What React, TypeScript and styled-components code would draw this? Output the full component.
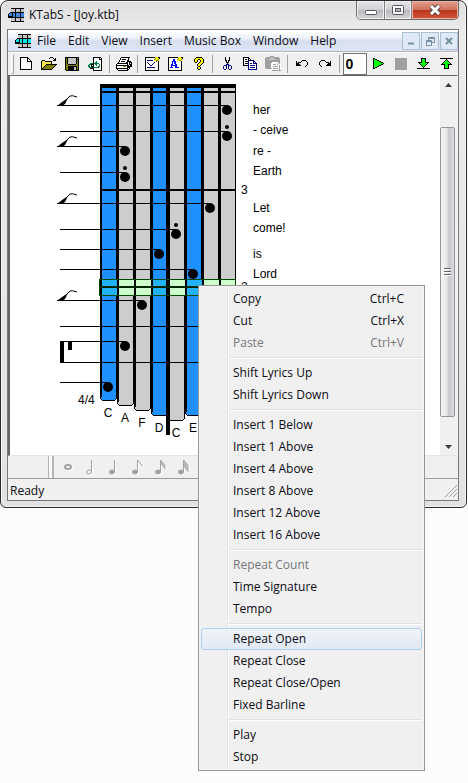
import React from "react";
import styled, { createGlobalStyle, css } from "styled-components";

const uiFont = `"Open Sans", "Noto Sans", sans-serif`;
const scoreFont = `"Liberation Sans", Arial, sans-serif`;

const GlobalStyle = createGlobalStyle`
  * { box-sizing: border-box; }
  body { margin: 0; background: #fcfcfc; font: 12px/16px ${uiFont}; color: #0b0b14; }
  button { font: inherit; color: inherit; border: 0; padding: 0; background: none; }
  svg { display: block; }
`;

/* ---------- pixel icons ---------- */

const palette: Record<string, string> = {
  k: "#000000",
  w: "#ffffff",
  o: "#808000",
  Y: "#ffff00",
  y: "#e8e080",
  g: "#008040",
  G: "#00ff00",
  n: "#000080",
  B: "#0000ff",
  s: "#a0a0a0",
  l: "#c4c4c4",
  c: "#00e8f0",
  b: "#3a86e0",
};

function PixelIcon({ rows }: { rows: string[] }) {
  const width = Math.max(...rows.map((r) => r.length));
  const runs: React.ReactElement[] = [];
  rows.forEach((row, y) => {
    let x = 0;
    while (x < row.length) {
      const ch = row[x];
      let end = x + 1;
      while (end < row.length && row[end] === ch) end++;
      if (palette[ch]) {
        runs.push(<rect key={`${x}-${y}`} x={x} y={y} width={end - x} height={1} fill={palette[ch]} />);
      }
      x = end;
    }
  });
  return (
    <svg width={width} height={rows.length} shapeRendering="crispEdges" aria-hidden="true">
      {runs}
    </svg>
  );
}

const logo = (fill: string) =>
  [
    "...kkkkkkkkkkkkk",
    "...llllkllllklll",
    "...llllkllllklll",
    "...llllkllllklll",
    "..kkkkkkkkkkkkkk",
    ".kbbkbbkbbbbkbbb",
    "kbbbkbbkbbbbkbbb",
    "kbbbkbbkbbbbkbbb",
    "kkkkkbbkbbbbkbbb",
    "kkkkkkkkkkkkkkkk",
    "...llllkllllklll",
    "...llllkllllklll",
    "...llllkllllklll",
    "...kkkkkkkkkkkkk",
  ].map((r) => r.replace(/b/g, fill));

const icons = {
  new: [
    "kkkkkkkk....",
    "kwwwwwwkk...",
    "kwwwwwwkwk..",
    "kwwwwwwkwwk.",
    "kwwwwwwkkkkk",
    "kwwwwwwwwwwk",
    "kwwwwwwwwwwk",
    "kwwwwwwwwwwk",
    "kwwwwwwwwwwk",
    "kwwwwwwwwwwk",
    "kwwwwwwwwwwk",
    "kwwwwwwwwwwk",
    "kkkkkkkkkkkk",
  ],
  open: [
    ".........kkk....",
    "........k...k.k.",
    ".............kk.",
    ".kkk........kkk.",
    "kyYykkkkkkk.....",
    "kYyYyYyYyYk.....",
    "kyYyYyYyYyk.....",
    "kYyYykkkkkkkkkkk",
    "kyYykoooooooook.",
    "kYykoooooooook..",
    "kykoooooooook...",
    "kkoooooooook....",
    "kkkkkkkkkkk.....",
  ],
  save: [
    "kkkkkkkkkkkkkk",
    "kokllllllllklk",
    "kokllllllllkkk",
    "kokllllllllkok",
    "kokllllllllkok",
    "kokllllllllkok",
    "kokllllllllkok",
    "kookkkkkkkkook",
    "kooooooooooook",
    "kookkkkkkkkkok",
    "kookkkkkkllkok",
    "kookkkkkkllkok",
    "kookkkkkkllkok",
    ".kkkkkkkkkkkkk",
  ],
  import: [
    ".....kkkkkkkk.",
    ".....kwwwwwkwk",
    ".....kwwwwwkkk",
    ".....kwwwwwwwk",
    ".....kwwgwwwwk",
    ".....kwggwwwwk",
    "..gggkgggggwwk",
    ".ggkkkwggwwgwk",
    "gg.k.kwwgwwgwk",
    "gg.kkkwwwwggwk",
    ".gggkgggggkwwk",
    "..kkkkwwwwwwwk",
    ".....kwwwwwwwk",
    ".....kkkkkkkkk",
  ],
  print: [
    ".....kkkkkkkkk..",
    "....kwwwwwwwk...",
    "....kwkkkkwwk...",
    "...kwwwwwwwkk...",
    "...kwkkkkwwkkkk.",
    "..kwwwwwwwkkwkkk",
    ".kkkkkkkkkkkwkwk",
    "kwwwwwwwwwwkwkkk",
    "kkkkkkkkkkkkkwkk",
    "kwwwwwwooowkkkkk",
    "kwwwwwwwwwwkkk..",
    "kkkkkkkkkkkkwk..",
    ".kwwwwwwwwwkk...",
    "..kkkkkkkkkk....",
  ],
  props: [
    "kkkkkkkkkkYYYkk",
    "kwwwwwwwwwoYYYk",
    "kwwwwwwwwoYYYo.",
    "kwnnnnnnwYYooY.",
    "kwwwwwwwwwwowk.",
    "kwnwwwwwwnwwwk.",
    "kwwnwwwwnwwwwk.",
    "kwwwnwwnwwwwwk.",
    "kwwwwnnwwwwwwk.",
    "kwwwwwwwwwwwwk.",
    "kwnnnnnnnnwwwk.",
    "kwwwwwwwwwwwwk.",
    "kwwwwwwwwwwwwk.",
    "kkkkkkkkkkkkkk.",
  ],
  font: [
    "kkkkkkkkkkYYYkk",
    "kwwwwwwwwwoYYYk",
    "kwwwwBBwwoYYYo.",
    "kwwwwBBwwYYooY.",
    "kwwwBBBBwwwwwk.",
    "kwwwBwBBwwwwwk.",
    "kwwwBwBBwwwwwk.",
    "kwwBBwwBBwwwwk.",
    "kwwBBBBBBwwwwk.",
    "kwwBwwwBBwwwwk.",
    "kwBBBwwBBBBwwk.",
    "kwwwwwwwwwwwwk.",
    "kwwwwwwwwwwwwk.",
    "kkkkkkkkkkkkkk.",
  ],
  help: [
    "..kkkkkk..",
    ".kYYYYYYk.",
    "kYYYkkYYYk",
    "kYYk..kYYk",
    "kYYk..kYYk",
    ".kk..kYYYk",
    "....kYYYk.",
    "...kYYYk..",
    "...kYYk...",
    "....kk....",
    "...kYYk...",
    "...kYYk...",
    "....kk....",
  ],
  cut: [
    "..k...k..",
    "..k...k..",
    "..k...k..",
    "..kk.kk..",
    "...k.k...",
    "...kkk...",
    "....k....",
    "...nnn...",
    ".nnn.nnn.",
    "n..n.n..n",
    "n..n.n..n",
    "n..n.n..n",
    ".nn...nn.",
  ],
  copy: [
    "kkkkkk.........",
    "kwwwwkk........",
    "kwkkwkwk.......",
    "kwwwwnnnnnn....",
    "kwkkknwwwwnn...",
    "kwwwwnwwwwnwn..",
    "kwkkknwnnwnnnn.",
    "kwwwwnwwwwwwwn.",
    "kkkkknwnnnnnwn.",
    ".....nwwwwwwwn.",
    ".....nwnnnnnwn.",
    ".....nwwwwwwwn.",
    ".....nnnnnnnnn.",
  ],
  paste: [
    ".....ssss.......",
    ".sssssllssssss..",
    "sssssllllssssss.",
    "ssslllllllsssss.",
    "sssssssssssssss.",
    "sssssssssssssss.",
    "ssssssswwwwwwss.",
    "sssssswwwwwwlws.",
    "sssssswwssswllww",
    "sssssswwwwwwwwsw",
    "sssssswwssssswsw",
    "sssssswwwwwwwwsw",
    ".sssssswssssswsw",
    "......wwwwwwwwsw",
    ".......sssssssss",
  ],
  undo: [
    "......kkkk..",
    "k....k....k.",
    "k.kkk......k",
    "kkk........k",
    "kkkk.......k",
    "kkkkk.....k.",
    ".........k..",
  ],
  redo: [
    "..kkkk......",
    ".k....k....k",
    "k......kkk.k",
    "k........kkk",
    "k.......kkkk",
    ".k.....kkkkk",
    "..k.........",
  ],
  play: [
    "kk.........",
    "kGkk.......",
    "kGGGkk.....",
    "kGGGGGkk...",
    "kGGGGGGGkk.",
    "kGGGGGGGGGk",
    "kGGGGGGGkk.",
    "kGGGGGkk...",
    "kGGGkk.....",
    "kGkk.......",
    "kk.........",
  ],
  stop: Array(12).fill("ssssssssssss"),
  down: [
    "....kkkkk....",
    "....kGGGk....",
    "....kGGGk....",
    "....kGGGk....",
    ".kkkkGGGkkkk.",
    "..kGGGGGGGk..",
    "...kGGGGGk...",
    "....kGGGk....",
    ".....kGk.....",
    "......k......",
    "kkkkkkkkkkkkk",
  ],
  up: [
    "kkkkkkkkkkkkk",
    "......k......",
    ".....kGk.....",
    "....kGGGk....",
    "...kGGGGGk...",
    "..kGGGGGGGk..",
    ".kkkkGGGkkkk.",
    "....kGGGk....",
    "....kGGGk....",
    "....kGGGk....",
    "....kkkkk....",
  ],
};

/* ---------- window frame ---------- */

const Desktop = styled.main`
  position: relative;
  min-height: 783px;
  padding-right: 1px;
  background: #fcfcfc;
`;

const AppWindow = styled.section`
  padding: 0 7px 6px 6px;
  border: 1px solid #2c2c2e;
  border-radius: 8px 8px 6px 6px;
  background: linear-gradient(#dedede, #ebebeb 28px, #e2e2e2);
  box-shadow: inset 0 0 0 1px #f6f6f6;
`;

const TitleBar = styled.header`
  display: flex;
  align-items: flex-start;
  height: 28px;
  padding-left: 1px;
`;

const Title = styled.h1`
  flex: 1;
  display: flex;
  align-items: center;
  gap: 5px;
  height: 28px;
  margin: 0;
  font: inherit;
`;

const CaptionButtons = styled.div`
  display: flex;
  height: 19px;
  border: 1px solid #6d6d70;
  border-top: 0;
  border-radius: 0 0 5px 5px;
  overflow: hidden;
`;

const CaptionButton = styled.button<{ $close?: boolean }>`
  display: grid;
  place-items: center;
  width: ${(p) => (p.$close ? 47 : 27)}px;
  background: linear-gradient(#e6e6e8, #d0d0d4 50%, #b9b9bf 50%, #d4d4d8);
  box-shadow: inset 0 0 0 1px #f0f0f2;
  & + & { border-left: 1px solid #7d7d80; }
  ${(p) =>
    p.$close &&
    css`
      background: linear-gradient(#e3a08f, #d0715d 48%, #b8341b 50%, #d4573a);
      box-shadow: inset 0 0 0 1px #eab3a5;
    `}
`;

const Client = styled.div`
  border: 1px solid #77777c;
  background: #f0f0f0;
`;

const MenuBar = styled.nav`
  display: flex;
  align-items: center;
  height: 21px;
  padding-left: 7px;
  border-top: 1px solid #ffffff;
  background: linear-gradient(#ffffff, #eef1f9 35%, #d7dff0 50%, #dfe5f3);
`;

const MenuTitle = styled.button`
  height: 20px;
  padding: 0 6px;
`;

const ChildControls = styled.div`
  display: flex;
  gap: 1px;
  margin-left: auto;
`;

const ChildButton = styled.button`
  display: grid;
  place-items: center;
  width: 18px;
  height: 18px;
  border: 1px solid #a9c0d3;
  background: #dfeaf6;
`;

const ToolBar = styled.div`
  display: flex;
  align-items: center;
  height: 24px;
  padding-left: 3px;
  border-top: 1px solid #b4b4b4;
  box-shadow: inset 0 1px #ffffff;
`;

const Grip = styled.span`
  width: 3px;
  height: 20px;
  margin-right: 1px;
  border: 1px solid #a5a5a5;
  border-top-color: #ffffff;
  border-left-color: #ffffff;
`;

const Tool = styled.button`
  display: grid;
  place-items: center;
  width: 23px;
  height: 22px;
`;

const Divider = styled.span`
  width: 1px;
  height: 18px;
  margin: 0 3px 0 2px;
  background: #a0a0a0;
`;

const CountInput = styled.input`
  width: 24px;
  height: 22px;
  padding: 0 2px;
  border: 1px solid #707070;
  background: #ffffff;
  color: #000000;
  font: bold 14px/18px ${scoreFont};
`;

/* ---------- score view ---------- */

const View = styled.div`
  display: flex;
  border: 1px solid #66666a;
  border-left-width: 2px;
  border-right-color: #f4f4f4;
  border-bottom-color: #e4e4e4;
  background: #ffffff;
`;

const ScoreArea = styled.div`
  flex: 1;
  min-width: 0;
  overflow: hidden;
`;

const ScrollBar = styled.div`
  display: flex;
  flex-direction: column;
  width: 17px;
  background: #f0f0f0;
`;

const ScrollArrow = styled.button`
  display: grid;
  place-items: center;
  height: 17px;
`;

const ScrollTrack = styled.div`
  flex: 1;
  padding: 34px 2px 21px 0;
`;

const ScrollThumb = styled.div`
  display: grid;
  place-items: center;
  height: 100%;
  border: 1px solid #97979a;
  border-radius: 2px;
  background: linear-gradient(90deg, #f6f6f6, #e6e6e8 45%, #c8c8cf 60%, #dadadf);
`;

const NoteBar = styled.div`
  display: flex;
  align-items: center;
  height: 23px;
  padding-left: 40px;
  border-bottom: 1px solid #9a9a9a;
`;

const NoteGrip = styled.span`
  width: 6px;
  height: 22px;
  margin-right: 2px;
  border: 1px solid #b4b4b4;
  border-width: 0 2px 0 1px;
  background: #fafafa;
`;

const StatusBar = styled.footer`
  display: flex;
  align-items: center;
  justify-content: space-between;
  height: 21px;
  padding: 2px 1px 0 2px;
`;

/* ---------- context menu ---------- */

const ContextMenu = styled.div`
  position: absolute;
  left: 198px;
  top: 285px;
  width: 227px;
  padding: 2px;
  border: 1px solid #979797;
  background: linear-gradient(90deg, transparent 28px, #e2e3e3 28px 29px, #ffffff 29px 30px, transparent 30px) #f0f0f0;
  box-shadow: inset 0 0 0 1px #f5f5f5;
`;

const MenuItem = styled.button<{ $active?: boolean }>`
  display: flex;
  justify-content: space-between;
  align-items: center;
  width: 100%;
  height: 22px;
  padding: 0 17px 0 31px;
  border: 1px solid transparent;
  border-radius: 3px;
  text-align: left;
  &:disabled { color: #77777b; }
  ${(p) =>
    p.$active &&
    css`
      border-color: #aecff7;
      background: linear-gradient(rgba(240, 244, 250, 0.8), rgba(222, 232, 246, 0.8));
    `}
`;

const MenuRule = styled.hr`
  height: 2px;
  margin: 3px 0 3px 28px;
  border: 0;
  border-top: 1px solid #e0e0e0;
  background: #ffffff;
`;

/* ---------- score drawing ---------- */

const BLUE = "#1e90ff";
const GRAY = "#cdcdcd";

const tines = [
  { x: 101, fill: BLUE, bottom: 400, label: "C" },
  { x: 118, fill: GRAY, bottom: 405, label: "A" },
  { x: 135, fill: GRAY, bottom: 410, label: "F" },
  { x: 152, fill: BLUE, bottom: 415, label: "D" },
  { x: 169, fill: GRAY, bottom: 420, label: "C" },
  { x: 186, fill: BLUE, bottom: 415, label: "E" },
  { x: 203, fill: GRAY, bottom: 410, label: "G" },
  { x: 220, fill: GRAY, bottom: 405, label: "B" },
];

const notes = [
  { y: 105, x: 227, flag: true },
  { y: 131, x: 227, dot: true },
  { y: 146, x: 125, flag: true },
  { y: 172, x: 125, dot: true },
  { y: 203, x: 210, flag: true },
  { y: 229, x: 176, dot: true },
  { y: 249, x: 159 },
  { y: 269, x: 193 },
  { y: 300, x: 142, flag: true },
  { y: 326, x: 210 },
  { y: 341, x: 125 },
  { y: 362, x: 210 },
  { y: 382, x: 108 },
];

const lyrics: [string, number, number][] = [
  ["her", 253, 114],
  ["- ceive", 253, 134],
  ["re -", 253, 155],
  ["Earth", 253, 175],
  ["3", 241, 194],
  ["Let", 253, 212],
  ["come!", 253, 232],
  ["is", 253, 258],
  ["Lord", 253, 278],
  ["2", 241, 291],
  ["4/4", 78, 404],
];

function Score() {
  return (
    <svg width="428" height="379" viewBox="10 76 428 379" role="img" aria-label="Joy tablature">
      <g shapeRendering="crispEdges">
        {tines.map((t) => (
          <path
            key={t.x}
            d={`M${t.x - 0.5} 85V${t.bottom - 1.5}l2 2h12l2 -2V85z`}
            fill={t.fill}
            stroke="#000"
          />
        ))}
        <rect x="99" y="279" width="137" height="17" fill="#ccffcc" />
        {tines
          .filter((t) => t.fill === BLUE)
          .map((t) => (
            <rect key={t.x} x={t.x} y="279" width="16" height="17" fill="#22b2fa" />
          ))}
        {tines.map((t) => (
          <rect key={t.x} x={t.x - 1} y="85" width="2" height={t.bottom - 88} />
        ))}
        <rect x="100" y="84" width="136" height="4" />
        <rect x="100" y="91" width="136" height="2" />
        <rect x="235" y="84" width="1" height="318" />
        <rect x="166" y="84" width="4" height="351" />
        <rect x="100" y="189" width="136" height="2" />
        {notes.map((n) => (
          <rect key={n.y} x={n.flag ? 57 : 60} y={n.y} width={n.x - (n.flag ? 57 : 60)} height="1" />
        ))}
        <rect x="60" y="341" width="4" height="22" />
        <rect x="68" y="341" width="4" height="9" />
        <rect x="99" y="286" width="137" height="2" fill="#002800" />
        <path d="M99.5 279.5h136v16h-136z" fill="none" stroke="#004800" />
      </g>
      {notes.map((n) => (
        <g key={n.y}>
          <circle cx={n.x} cy={n.y + 5} r="5" />
          {n.dot && <circle cx={n.x} cy={n.y - 4} r="2" />}
          {n.flag && (
            <>
              <path d={`M57 ${n.y + 1}L62 ${n.y - 3}L68 ${n.y - 7}L65 ${n.y - 1}L62 ${n.y + 1}z`} />
              <path
                d={`M65 ${n.y - 4}L70 ${n.y - 9}Q72 ${n.y - 10} 77 ${n.y - 8}`}
                fill="none"
                stroke="#000"
              />
            </>
          )}
        </g>
      ))}
      <g fontFamily={scoreFont} fontSize="12">
        {lyrics.map(([text, x, y]) => (
          <text key={`${text}${y}`} x={x} y={y}>
            {text}
          </text>
        ))}
        {tines.map((t) => (
          <text key={t.x} x={t.x + 7} y={t.bottom + 17} textAnchor="middle">
            {t.label}
          </text>
        ))}
      </g>
    </svg>
  );
}

function NoteGlyph({ kind }: { kind: number }) {
  const draw = (color: string) => (
    <g fill={color} stroke={color}>
      {kind === 0 && <ellipse cx="8" cy="8" rx="3" ry="2" fill="none" strokeWidth="2" />}
      {kind > 0 && (
        <>
          <ellipse cx="6" cy="13" rx="2.5" ry="2" fill={kind === 1 ? "none" : color} />
          <path d="M8.5 13V1" fill="none" />
        </>
      )}
      {kind > 2 && <path d="M8.5 1l5 6" fill="none" />}
      {kind > 3 && <path d="M8.5 4l5 6M8.5 2.500l5 6" fill="none" />}
      {kind > 4 && <path d="M8.5 7l5 6M8.5 5.500l5 6" fill="none" />}
    </g>
  );
  return (
    <svg width="16" height="17" aria-hidden="true">
      <g transform="translate(1 1)">{draw("#ffffff")}</g>
      {draw("#a0a0a0")}
    </svg>
  );
}

/* ---------- content ---------- */

type Entry = { label: string; shortcut?: string; disabled?: boolean; active?: boolean };

const menuGroups: Entry[][] = [
  [
    { label: "Copy", shortcut: "Ctrl+C" },
    { label: "Cut", shortcut: "Ctrl+X" },
    { label: "Paste", shortcut: "Ctrl+V", disabled: true },
  ],
  [{ label: "Shift Lyrics Up" }, { label: "Shift Lyrics Down" }],
  [
    { label: "Insert 1 Below" },
    { label: "Insert 1 Above" },
    { label: "Insert 4 Above" },
    { label: "Insert 8 Above" },
    { label: "Insert 12 Above" },
    { label: "Insert 16 Above" },
  ],
  [{ label: "Repeat Count", disabled: true }, { label: "Time Signature" }, { label: "Tempo" }],
  [
    { label: "Repeat Open", active: true },
    { label: "Repeat Close" },
    { label: "Repeat Close/Open" },
    { label: "Fixed Barline" },
  ],
  [{ label: "Play" }, { label: "Stop" }],
];

const toolGroups: [string, keyof typeof icons][][] = [
  [["New", "new"], ["Open", "open"], ["Save", "save"], ["Import", "import"]],
  [["Print", "print"]],
  [["Properties", "props"], ["Fonts", "font"], ["Help", "help"]],
  [["Cut", "cut"], ["Copy", "copy"], ["Paste", "paste"]],
  [["Undo", "undo"], ["Redo", "redo"]],
];

const playTools: [string, keyof typeof icons][] = [
  ["Play", "play"],
  ["Stop", "stop"],
  ["Move down", "down"],
  ["Move up", "up"],
];

const noteNames = ["Whole", "Half", "Quarter", "Eighth", "Sixteenth", "Thirty-second"];

export default function App() {
  return (
    <>
      <GlobalStyle />
      <Desktop>
        <AppWindow>
          <TitleBar>
            <Title>
              <PixelIcon rows={logo("b")} />
              KTabS - [Joy.ktb]
            </Title>
            <CaptionButtons>
              <CaptionButton aria-label="Minimize">
                <svg width="14" height="14">
                  <rect x="1.5" y="7.5" width="11" height="4" rx="1" fill="#fff" stroke="#55555c" />
                </svg>
              </CaptionButton>
              <CaptionButton aria-label="Maximize">
                <svg width="12" height="10">
                  <rect x="0.5" y="0.5" width="11" height="9" rx="1" fill="#fff" stroke="#55555c" />
                  <rect x="3.5" y="3.5" width="5" height="3" fill="#b5b5bb" stroke="#55555c" />
                </svg>
              </CaptionButton>
              <CaptionButton $close aria-label="Close">
                <svg width="14" height="12">
                  <path d="M3 2l8 8M11 2l-8 8" stroke="#55454a" strokeWidth="5" />
                  <path d="M3 2l8 8M11 2l-8 8" stroke="#fff" strokeWidth="3" />
                </svg>
              </CaptionButton>
            </CaptionButtons>
          </TitleBar>
          <Client>
            <MenuBar>
              <PixelIcon rows={logo("c")} />
              {["File", "Edit", "View", "Insert", "Music Box", "Window", "Help"].map((m) => (
                <MenuTitle key={m}>{m}</MenuTitle>
              ))}
              <ChildControls>
                <ChildButton aria-label="Minimize score">
                  <svg width="8" height="8">
                    <path d="M1 6.500h6" stroke="#7890a4" strokeWidth="2" />
                  </svg>
                </ChildButton>
                <ChildButton aria-label="Restore score">
                  <svg width="9" height="9" fill="none" stroke="#7890a4">
                    <path d="M2.500 3V.5h6v5H6M2 1.500h6M.5 3.500h5v5h-5zM1 4.500h5" />
                  </svg>
                </ChildButton>
                <ChildButton aria-label="Close score">
                  <svg width="8" height="8">
                    <path d="M1 1l6 6M7 1l-6 6" stroke="#7890a4" strokeWidth="2" />
                  </svg>
                </ChildButton>
              </ChildControls>
            </MenuBar>
            <ToolBar role="toolbar" aria-label="Standard">
              <Grip />
              {toolGroups.map((group) => (
                <React.Fragment key={group[0][0]}>
                  {group.map(([name, icon]) => (
                    <Tool key={name} aria-label={name} disabled={icon === "paste"}>
                      <PixelIcon rows={icons[icon]} />
                    </Tool>
                  ))}
                  <Divider />
                </React.Fragment>
              ))}
              <CountInput aria-label="Transpose" defaultValue="0" />
              {playTools.map(([name, icon]) => (
                <Tool key={name} aria-label={name} disabled={icon === "stop"}>
                  <PixelIcon rows={icons[icon]} />
                </Tool>
              ))}
            </ToolBar>
            <View>
              <ScoreArea>
                <Score />
              </ScoreArea>
              <ScrollBar>
                <ScrollArrow aria-label="Scroll up">
                  <svg width="7" height="4">
                    <path d="M0 4L3.500 0L7 4z" fill="#3c3c40" />
                  </svg>
                </ScrollArrow>
                <ScrollTrack>
                  <ScrollThumb>
                    <svg width="7" height="9" shapeRendering="crispEdges">
                      <path d="M0 .5h7M0 3.500h7M0 6.500h7" stroke="#66666c" />
                      <path d="M0 1.500h7M0 4.500h7M0 7.500h7" stroke="#f8f8f8" />
                    </svg>
                  </ScrollThumb>
                </ScrollTrack>
                <ScrollArrow aria-label="Scroll down">
                  <svg width="7" height="4">
                    <path d="M0 0L3.500 4L7 0z" fill="#3c3c40" />
                  </svg>
                </ScrollArrow>
              </ScrollBar>
            </View>
            <NoteBar role="toolbar" aria-label="Notes">
              <NoteGrip />
              {noteNames.map((name, i) => (
                <Tool key={name} aria-label={name} disabled>
                  <NoteGlyph kind={i} />
                </Tool>
              ))}
            </NoteBar>
            <StatusBar>
              Ready
              <svg width="12" height="12">
                <path d="M0 12L12 0M4 12L12 4M8 12L12 8" stroke="#9a9a9e" />
              </svg>
            </StatusBar>
          </Client>
        </AppWindow>

        <ContextMenu role="menu">
          {menuGroups.map((group, i) => (
            <React.Fragment key={group[0].label}>
              {i > 0 && <MenuRule />}
              {group.map((item) => (
                <MenuItem key={item.label} role="menuitem" $active={item.active} disabled={item.disabled}>
                  <span>{item.label}</span>
                  {item.shortcut && <span>{item.shortcut}</span>}
                </MenuItem>
              ))}
            </React.Fragment>
          ))}
        </ContextMenu>
      </Desktop>
    </>
  );
}
